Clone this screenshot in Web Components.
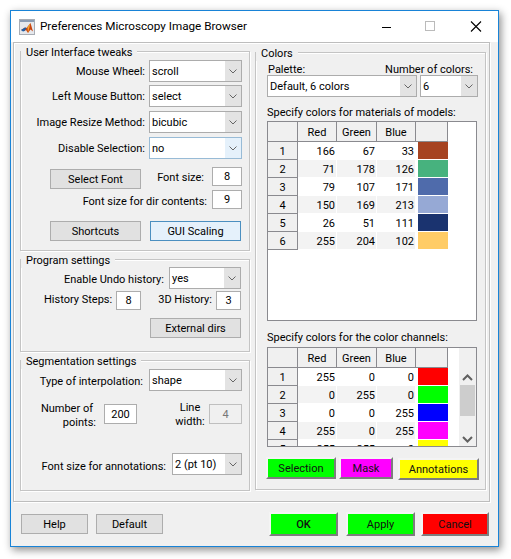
<!DOCTYPE html>
<html><head><meta charset="utf-8">
<style>
html,body{margin:0;padding:0;background:#fff;width:511px;height:559px;overflow:hidden}
body{font:11px Roboto,"Liberation Sans",sans-serif;color:#000}
</style></head><body>
<x-window title-text="Preferences Microscopy Image Browser">
  <x-main>
    <x-col slot="left">
      <x-group legend="User Interface tweaks" style="height:200px;--pt:8px">
        <x-row><x-label>Mouse Wheel:</x-label><x-select style="width:93px">scroll</x-select></x-row>
        <x-row style="margin-top:3px"><x-label>Left Mouse Button:</x-label><x-select style="width:93px">select</x-select></x-row>
        <x-row style="margin-top:4px"><x-label>Image Resize Method:</x-label><x-select style="width:93px">bicubic</x-select></x-row>
        <x-row style="margin-top:4px"><x-label>Disable Selection:</x-label><x-select style="width:93px" hot>no</x-select></x-row>
        <x-row style="margin-top:8px;height:20px;align-items:flex-start;gap:0">
          <x-btn style="width:91px;margin-right:auto;margin-left:29px;margin-top:2px">Select Font</x-btn>
          <x-label style="margin-right:8px;line-height:21px">Font size:</x-label><x-num style="width:30px;height:19px">8</x-num>
        </x-row>
        <x-row style="margin-top:3px;height:19px;gap:0"><x-label style="margin-right:5px;margin-top:4px">Font size for dir contents:</x-label><x-num style="width:30px;height:19px">9</x-num></x-row>
        <x-row style="margin-top:12px;padding-right:1px;gap:9px"><x-btn style="width:91px">Shortcuts</x-btn><x-btn style="width:91px" hot>GUI Scaling</x-btn></x-row>
      </x-group>
      <x-group legend="Program settings" style="height:93px;margin-top:8px;--pt:7px">
        <x-row style="padding-right:1px"><x-label style="margin-right:1px;margin-top:2px">Enable Undo history:</x-label><x-select style="width:72px">yes</x-select></x-row>
        <x-row style="margin-top:2px;height:18px;padding-right:1px;gap:0">
          <x-label style="margin-right:4px;line-height:20px">History Steps:</x-label><x-num style="width:25px;height:19px">8</x-num>
          <x-label style="margin-left:17px;margin-right:4px;line-height:20px">3D History:</x-label><x-num style="width:25px;height:19px">3</x-num>
        </x-row>
        <x-row style="margin-top:9px;padding-right:1px"><x-btn style="width:91px">External dirs</x-btn></x-row>
      </x-group>
      <x-group legend="Segmentation settings" style="height:131px;margin-top:8px;--pt:8px">
        <x-row><x-label style="margin-right:2px;margin-top:2px">Type of interpolation:</x-label><x-select style="width:93px">shape</x-select></x-row>
        <x-row style="margin-top:13px;height:20px;justify-content:flex-start;padding-left:21px;gap:0">
          <x-label style="text-align:right;line-height:14px;margin-top:4px;width:54px"><span style="padding-right:3px;margin-left:-6px">Number of</span><br>points:</x-label>
          <x-num style="width:33px;height:20px;margin-left:8px">200</x-num>
          <x-label style="text-align:center;line-height:14px;margin-top:2px;width:32px;margin-left:37px">Line<br>width:</x-label>
          <x-num style="width:33px;height:20px;margin-left:3px" disabled>4</x-num>
        </x-row>
        <x-row style="margin-top:29px"><x-label style="margin-right:2px;margin-top:4px">Font size for annotations:</x-label><x-select style="width:70px">2 (pt 10)</x-select></x-row>
      </x-group>
    </x-col>
    <x-group slot="right" legend="Colors" style="height:438px;margin-top:1px;--pt:7px;--pr:8px">
      <x-row style="justify-content:space-between;padding-left:12px;padding-right:4px;height:16px">
        <x-label style="margin-top:2px">Palette:</x-label><x-label style="margin-top:2px">Number of colors:</x-label>
      </x-row>
      <x-row style="padding-left:11px;margin-top:-1px;justify-content:flex-start;gap:3px">
        <x-select style="width:150px">Default, 6 colors</x-select><x-select style="width:58px">6</x-select>
      </x-row>
      <x-label style="display:block;margin:7px 0 0 11px;line-height:17px">Specify colors for materials of models:</x-label>
      <x-table style="margin:0 0 0 11px;height:200px" rows="166,67,33,#a64321;71,178,126,#47b27e;79,107,171,#4f6bab;150,169,213,#96a9d5;26,51,111,#1a336f;255,204,102,#ffcc66"></x-table>
      <x-label style="display:block;margin:8px 0 0 11px;line-height:18px">Specify colors for the color channels:</x-label>
      <x-table scroll style="margin:0 0 0 11px;height:100px" rows="255,0,0,#ff0000;0,255,0,#00ff00;0,0,255,#0000ff;255,0,255,#ff00ff;255,255,0,#ffff00"></x-table>
      <x-row style="justify-content:flex-start;padding-left:10px;margin-top:10px;align-items:flex-start;gap:0">
        <x-raised style="width:70px;height:22px;background:#0f0">Selection</x-raised>
        <x-raised style="width:54px;height:22px;background:#f0f;margin-left:3px">Mask</x-raised>
        <x-raised style="width:81px;height:22px;background:#ff0;margin-left:5px;margin-top:1px">Annotations</x-raised>
      </x-row>
    </x-group>
  </x-main>
  <x-footer>
    <x-btn style="width:67px">Help</x-btn>
    <x-btn style="width:67px;margin-left:8px">Default</x-btn>
    <x-raised style="width:69px;height:24px;background:#0f0;margin-left:auto;margin-top:-2px;font-weight:500">OK</x-raised>
    <x-raised style="width:69px;height:24px;background:#0f0;margin-left:8px;margin-top:-2px">Apply</x-raised>
    <x-raised style="width:68px;height:24px;background:#f00;margin-left:6px;margin-top:-2px">Cancel</x-raised>
  </x-footer>
</x-window>
<script>
function def(name,css,html,extra){
  customElements.define(name,class extends HTMLElement{
    constructor(){super();this.attachShadow({mode:'open'});}
    connectedCallback(){const r=this.shadowRoot;r.innerHTML='<style>'+css+'</style>'+(typeof html==='function'?html(this):html);if(extra)extra(this);}
  });
}
const chev='<svg width="8" height="5" viewBox="0 0 8 5"><path d="M.5.5 4 4 7.500.5" fill="none" stroke="#666" stroke-width="1"/></svg>';
def('x-window',`
:host{display:flex;flex-direction:column;box-sizing:border-box;width:489px;height:537px;margin:10px 0 0 10px;border:1px solid #1883d7;background:#f0f0f0;box-shadow:2px 3px 8px rgba(0,0,0,.45)}
.tb{height:31px;background:#fff;display:flex;align-items:center;flex:none}
.ic{margin-left:8px;width:16px;height:16px}
.t{margin-left:5px;font-size:11.7px;flex:1;white-space:nowrap;margin-top:-2px}
.b{display:flex;align-items:center;margin-right:8px;gap:0}
.b svg{display:block}
`,`<div class="tb">
<svg class="ic" viewBox="0 0 16 16"><rect x=".5" y=".5" width="15" height="15" fill="#e6e8ec" stroke="#a8adb5"/><rect x="1" y="1" width="14" height="2" fill="#8b9cb3"/><path d="M2 11 6 8.500 7.500 9 11.500 4 14 12.500 11.500 10.500 9 14 7 11 5.500 12z" fill="#c9450f"/><path d="M2 11 6 8.500 7.500 9 5.500 12 4 12.500z" fill="#1f5fa8"/><path d="M11.500 4 8.500 8.500 9 14 10 10z" fill="#f4a52e"/></svg>
<span class="t"></span>
<div class="b">
<svg width="108" height="12" viewBox="0 0 108 12"><path d="M0 6.500H9" stroke="#000"/><rect x="43.500" y=".5" width="9" height="9" fill="none" stroke="#bbb"/><path d="M89 .5 99 10.500M99 .5 89 10.500" stroke="#000" stroke-width="1.100"/></svg>
</div></div><slot></slot>`,el=>{el.shadowRoot.querySelector('.t').textContent=el.getAttribute('title-text');});
def('x-main',`
:host{display:grid;grid-template-columns:230px 231px;column-gap:5px;box-sizing:border-box;width:477px;height:460px;margin:0 0 0 2px;border:1px solid #bdbdbd;box-shadow:inset 1px 1px #fff,1px 1px #fff;padding:8px 0 0 6px;align-items:start;flex:none}
`,`<slot name="left"></slot><slot name="right"></slot>`);
def('x-col',`:host{display:flex;flex-direction:column}`,`<slot></slot>`);
def('x-group',`
:host{display:block;position:relative;box-sizing:border-box;border:1px solid #c4c4c4;box-shadow:inset 1px 1px #fff,1px 1px #fff;padding:var(--pt,8px) var(--pr,7px) 0 0}
.l{position:absolute;left:0;top:-7px;background:#f0f0f0;padding:0 5px;line-height:15px;white-space:nowrap}
`,`<span class="l"></span><slot></slot>`,el=>{el.shadowRoot.querySelector('.l').textContent=el.getAttribute('legend');});
def('x-row',`:host{display:flex;justify-content:flex-end;align-items:center;gap:4px}`,`<slot></slot>`);
def('x-label',`:host{display:inline-block;white-space:nowrap;line-height:15px}`,`<slot></slot>`);
def('x-select',`
:host{display:flex;box-sizing:border-box;height:22px;background:#fff;border:1px solid #acacac;flex:none}
.v{flex:1;padding:1px 0 0 2px;line-height:20px;white-space:nowrap;overflow:hidden}
.c{width:16px;background:#e3e3e3;display:flex;align-items:center;justify-content:center}
:host([hot]){border-color:#98bbd6}
:host([hot]) .c{background:#e5f1fb}
`,`<div class="v"><slot></slot></div><div class="c">${chev}</div>`);
def('x-btn',`
:host{display:flex;box-sizing:border-box;height:20px;align-items:center;justify-content:center;background:#e1e1e1;border:1px solid #adadad;flex:none;white-space:nowrap;padding-top:1px}
:host([hot]){background:#e5f1fb;border-color:#4b8fc0}
`,`<slot></slot>`);
def('x-num',`
:host{display:flex;box-sizing:border-box;align-items:center;justify-content:center;background:#fff;border:1px solid #adadad;flex:none}
:host([disabled]){background:#f0f0f0;color:#777;border-color:#bfbfbf}
`,`<slot></slot>`);
def('x-raised',`
:host{display:flex;box-sizing:border-box;align-items:center;justify-content:center;border:2px solid;border-color:#f4f4f4 #7d7d7d #7d7d7d #f4f4f4;flex:none;white-space:nowrap;color:#111}
`,`<slot></slot>`);
def('x-footer',`:host{display:flex;box-sizing:border-box;flex:none;padding:12px 9px 0 10px;align-items:flex-start}`,`<slot></slot>`);
def('x-table',`
:host{display:flex;box-sizing:border-box;width:210px;border:1px solid #8a8a8f;background:#fff;overflow:hidden;flex:none}
.g{display:grid;grid-template-columns:30px 39px 40px 39px 32px;grid-auto-rows:18px;width:180px;align-content:start}
.h{background:#f0f0f0;border-right:1px solid #8a8a8f;border-bottom:1px solid #8a8a8f;display:flex;align-items:center;justify-content:center;box-sizing:border-box;height:20px;padding-top:2px}
.r{background:#f0f0f0;border-right:1px solid #8a8a8f;border-bottom:1px solid #8a8a8f;display:flex;align-items:center;justify-content:center;box-sizing:border-box;padding-top:2px}
.c{border-right:1px solid #fff;border-bottom:1px solid #fff;display:flex;align-items:center;justify-content:flex-end;padding:2px 1px 0 0;box-sizing:border-box;background:#fff}
.alt{background:#f3f3f3}
.s{box-sizing:border-box;border-left:1px solid #fff;border-bottom:1px solid #fff;background:#fff;padding-left:1px}
.s i{display:block;height:100%}
.sb{margin-left:auto;width:17px;background:#f0f0f0;display:flex;flex-direction:column;align-items:center}
.up{height:37px;display:flex;align-items:flex-end;padding-bottom:4px;box-sizing:border-box}
.th{width:15px;height:32px;background:#cdcdcd}
.dn{margin-top:17px}
`,el=>{
  const rows=el.getAttribute('rows').split(';').map(s=>s.split(','));
  let h='<div class="g" style="grid-template-rows:20px"><div class="h"></div><div class="h">Red</div><div class="h">Green</div><div class="h">Blue</div><div class="h"></div>';
  rows.forEach((r,i)=>{const a=i%2?' alt':'';
    h+=`<div class="r">${i+1}</div><div class="c${a}">${r[0]}</div><div class="c${a}">${r[1]}</div><div class="c${a}">${r[2]}</div><div class="s"><i style="background:${r[3]}"></i></div>`;});
  h+='</div>';
  if(el.hasAttribute('scroll'))h+=`<div class="sb"><div class="up"><svg width="11" height="7" viewBox="0 0 11 7"><path d="M1 6 5.500 1.500 10 6" fill="none" stroke="#606060" stroke-width="2"/></svg></div><div class="th"></div><div class="dn"><svg width="11" height="7" viewBox="0 0 11 7"><path d="M1 1 5.500 5.500 10 1" fill="none" stroke="#606060" stroke-width="2"/></svg></div></div>`;
  return h;
});
</script>
</body></html>
